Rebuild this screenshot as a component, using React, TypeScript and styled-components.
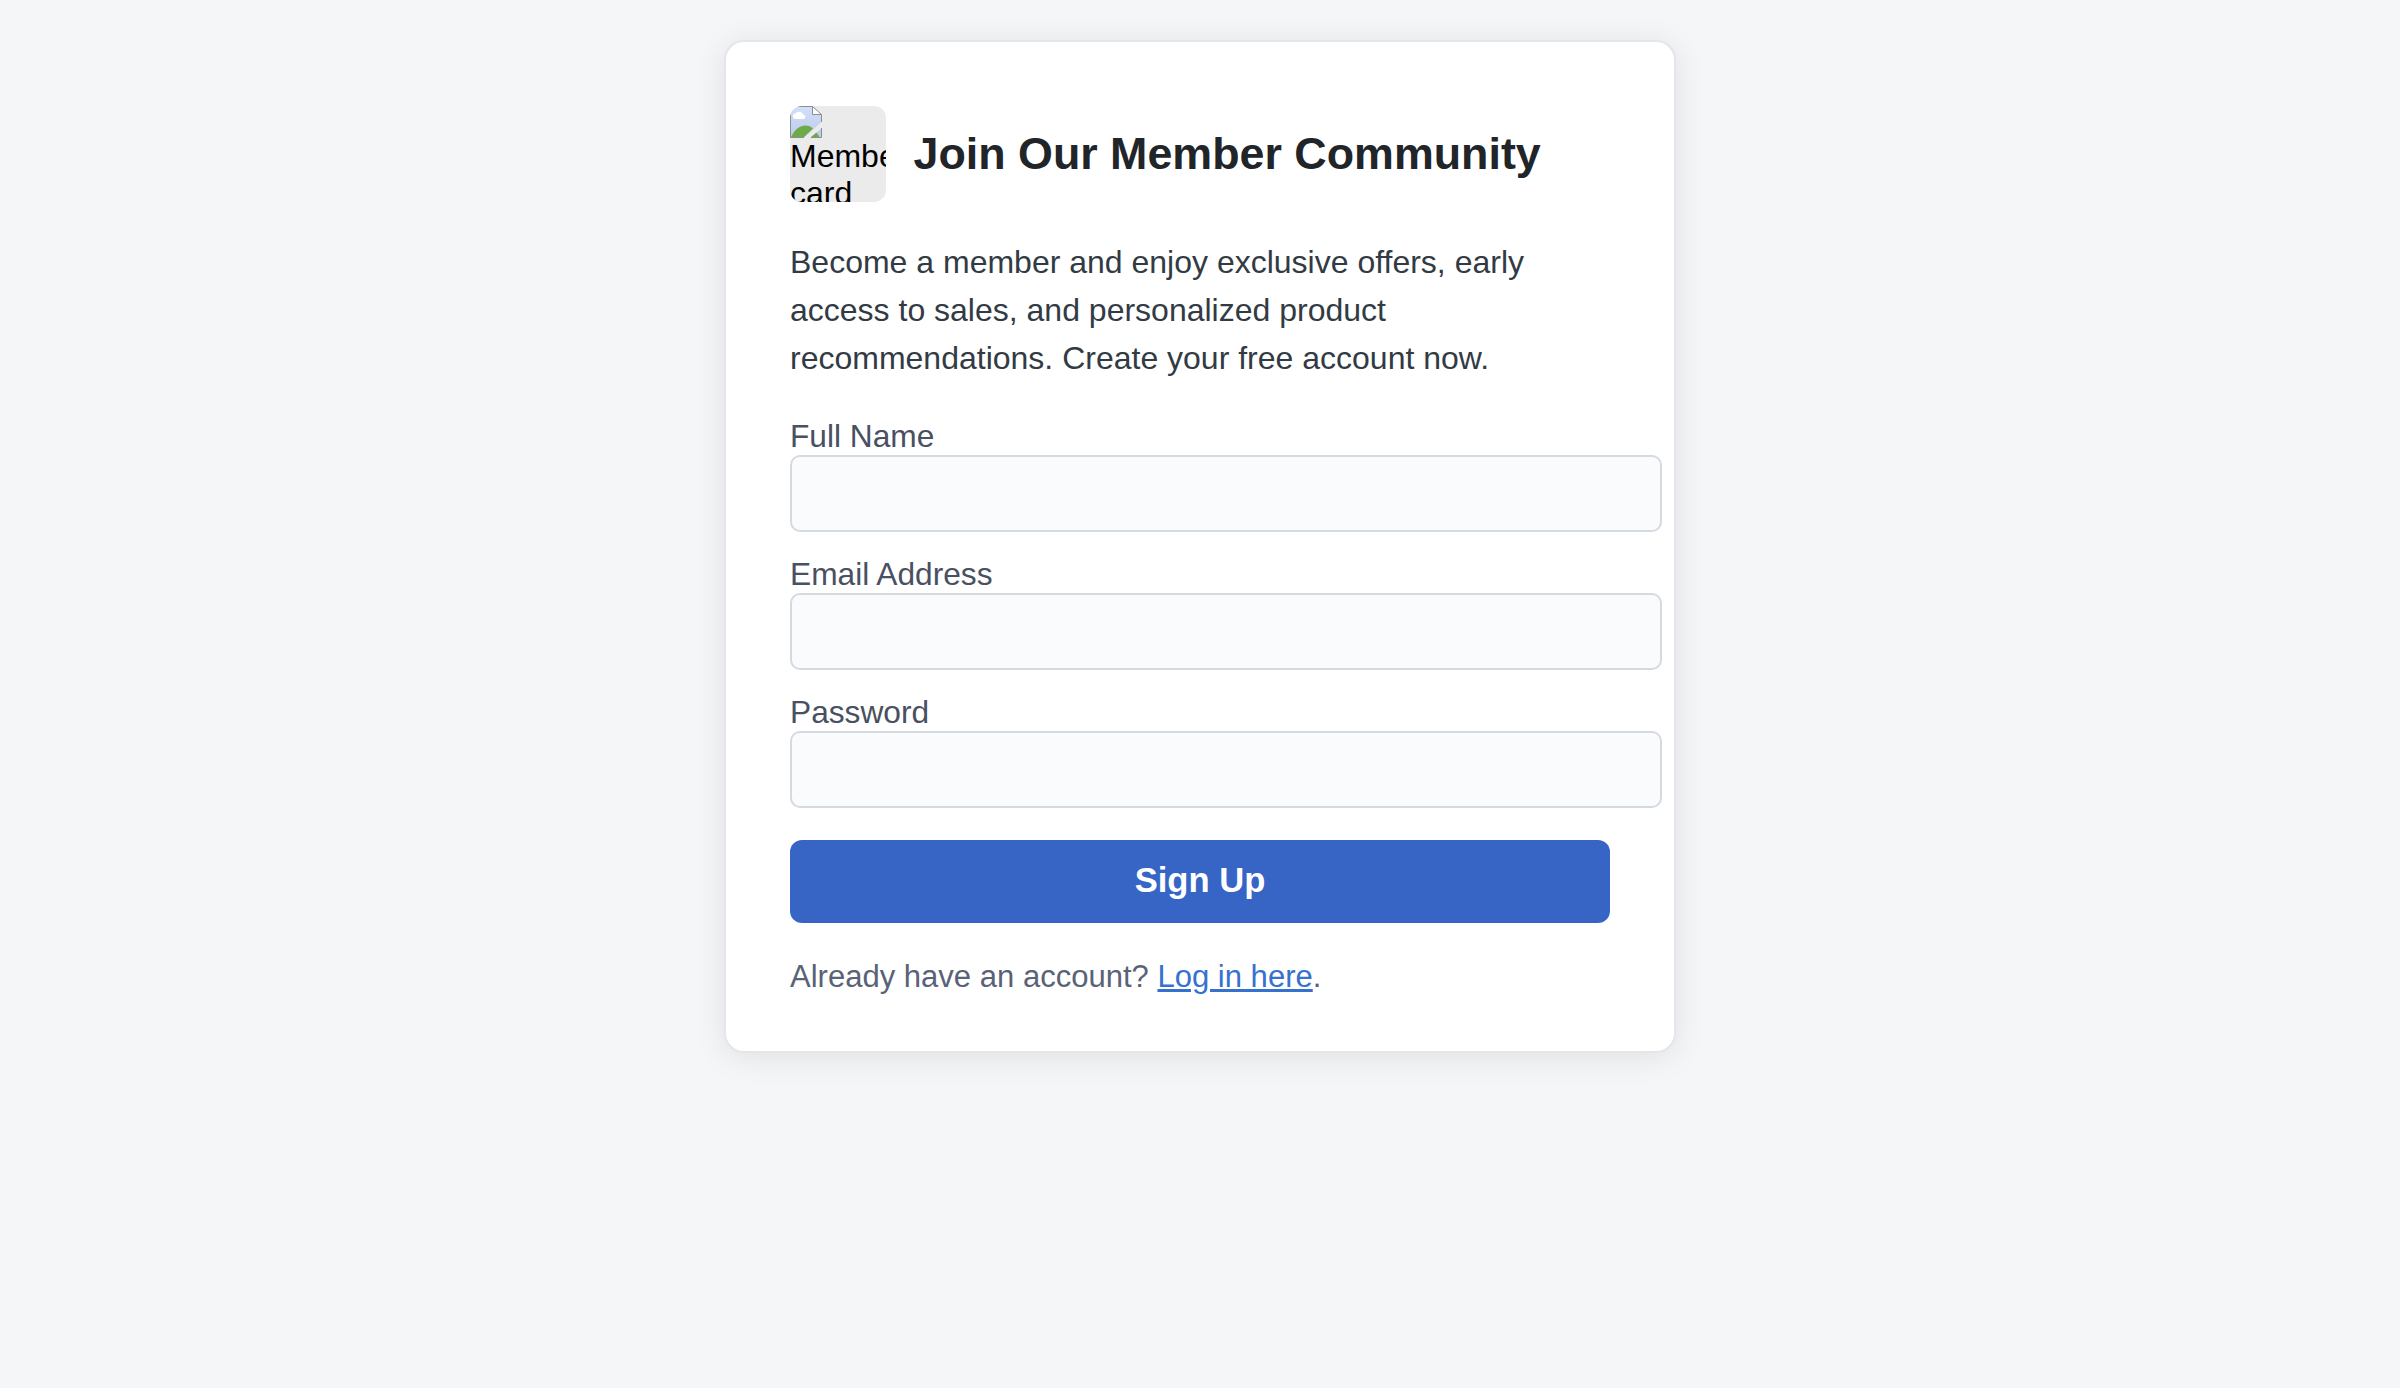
import React from 'react';
import styled, { createGlobalStyle } from 'styled-components';

const GlobalStyle = createGlobalStyle`
  body {
    margin: 0;
    background: #f5f6f8;
    font-family: "Liberation Sans", Arial, sans-serif;
    font-size: 32px;
  }
`;

const Page = styled.div`
  display: flex;
  justify-content: center;
  align-items: flex-start;
  min-height: 1388px;
  padding-top: 40px;
  box-sizing: border-box;
`;

const Card = styled.main`
  width: 820px;
  padding: 64px 64px 56px;
  background: #fff;
  border: 2px solid #e4e6e9;
  border-radius: 20px;
  box-shadow: 0 4px 32px rgba(0, 0, 0, 0.09);
`;

const Header = styled.header`
  display: flex;
  align-items: center;
  gap: 27.5px;
  margin-bottom: 36px;
`;

const Thumbnail = styled.div`
  flex: none;
  width: 96px;
  height: 96px;
  overflow: hidden;
  border-radius: 12px;
  background: #ebebeb;
  color: #000;
  line-height: 37px;
`;

const BrokenIcon = styled.svg`
  display: block;
  width: 32px;
  height: 32px;
`;

const Title = styled.h1`
  margin: 0;
  padding-bottom: 2px;
  font-size: 44.8px;
  font-weight: 700;
  color: #212529;
  white-space: nowrap;
`;

const Intro = styled.p`
  margin: 0 0 36px;
  line-height: 48px;
  color: #323b44;
`;

const Label = styled.label`
  display: block;
  font-size: 31.7px;
  line-height: 37px;
  color: #495062;
`;

const Input = styled.input`
  display: block;
  box-sizing: content-box;
  width: 100%;
  height: 37px;
  margin: 0 0 ${(p: { $last?: boolean }) => (p.$last ? 32 : 24)}px;
  padding: 18px 24px;
  border: 2px solid #d5dae1;
  border-radius: 10px;
  background: #fafbfd;
  font: inherit;
  outline: none;
`;

const SubmitButton = styled.button`
  display: block;
  width: 100%;
  height: 83px;
  padding: 0 0 2px;
  border: 0;
  border-radius: 12px;
  background: #3665c5;
  color: #fff;
  font-family: inherit;
  font-size: 34.6px;
  font-weight: 700;
`;

const Footer = styled.p`
  margin: 36px 0 0;
  font-size: 31.04px;
  line-height: 36px;
  color: #596277;
`;

const Link = styled.a`
  color: #3671ce;
  text-decoration: underline;
`;

const fields = [
  { id: 'name', label: 'Full Name', type: 'text' },
  { id: 'email', label: 'Email Address', type: 'email' },
  { id: 'password', label: 'Password', type: 'password' },
];

export default function App() {
  return (
    <>
      <GlobalStyle />
      <Page>
        <Card>
          <Header>
            <Thumbnail>
              <BrokenIcon viewBox="0 0 32 32">
                <defs>
                  <linearGradient id="sky" x1="0" y1="0" x2="0" y2="32" gradientUnits="userSpaceOnUse">
                    <stop offset="0" stopColor="#d3e0f8" />
                    <stop offset="1" stopColor="#bccaec" />
                  </linearGradient>
                </defs>
                <path d="M.5.5H22.5L31.5 9V16L14 31.5H.5Z" fill="url(#sky)" />
                <path d="M31.5 22V31.5H21Z" fill="url(#sky)" />
                <path d="M5.5 13a2.7 2.7 0 0 1 0-5.4C6.8 5 12.2 5 13 8.6c3.3.2 3.3 4.4 0 4.4Z" fill="#fff" />
                <path d="M1 31C5 23 10 19.5 15.5 19.5c3 0 5.5 1.2 7.5 3L14 31Z" fill="#6faa49" />
                <path d="M26.5 26.5 29.5 31H21Z" fill="#6faa49" />
                <path d="M22.5.5V8.5H31.5Z" fill="#fff" />
                <path d="M31.5 16V8.5L22.5.5H.5V31.5H14M22.5.5V8.5H31.5M31.5 22V31.5H21" fill="none" stroke="#8b8d91" />
              </BrokenIcon>
              Member card
            </Thumbnail>
            <Title>Join Our Member Community</Title>
          </Header>
          <Intro>
            Become a member and enjoy exclusive offers, early access to sales, and personalized product
            recommendations. Create your free account now.
          </Intro>
          <form onSubmit={(e) => e.preventDefault()}>
            {fields.map((f, i) => (
              <React.Fragment key={f.id}>
                <Label htmlFor={f.id}>{f.label}</Label>
                <Input id={f.id} type={f.type} $last={i === fields.length - 1} />
              </React.Fragment>
            ))}
            <SubmitButton type="submit">Sign Up</SubmitButton>
          </form>
          <Footer>
            Already have an account? <Link href="#">Log in here</Link>.
          </Footer>
        </Card>
      </Page>
    </>
  );
}
